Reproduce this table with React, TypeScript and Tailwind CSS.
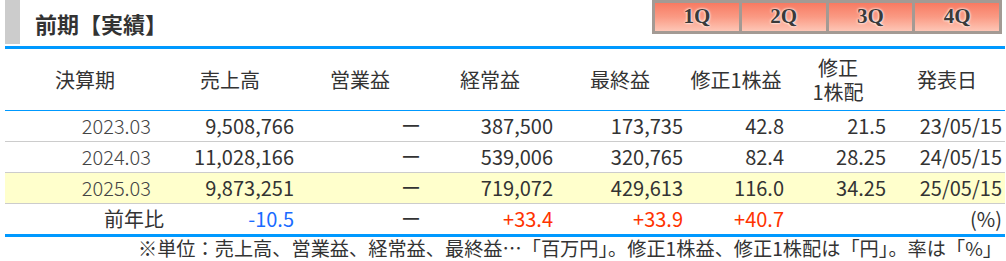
const cols = 'grid grid-cols-[160px_130px_130px_130px_130px_102px_102px_116px]'

const rows = [
  { term: '2023.03', sales: '9,508,766', op: 'ー', ord: '387,500', net: '173,735', eps: '42.8', div: '21.5', date: '23/05/15', hl: false },
  { term: '2024.03', sales: '11,028,166', op: 'ー', ord: '539,006', net: '320,765', eps: '82.4', div: '28.25', date: '24/05/15', hl: false },
  { term: '2025.03', sales: '9,873,251', op: 'ー', ord: '719,072', net: '429,613', eps: '116.0', div: '34.25', date: '25/05/15', hl: true },
]

function QuarterTabs() {
  return (
    <div className="ml-auto mr-[3px] flex h-[34px] w-[350px] gap-[3px] bg-[#a39a94] p-[3px]">
      {['1Q', '2Q', '3Q', '4Q'].map((q) => (
        <div
          key={q}
          className="flex flex-1 items-center justify-center bg-gradient-to-b from-[#f77a62] via-[#fa9a84] to-[#fdc6b6] font-['Liberation_Serif',serif] text-[21px] font-bold text-[#3a3a3a] [text-shadow:0_0_2px_#fff,0_0_3px_#fff]"
        >
          {q}
        </div>
      ))}
    </div>
  )
}

export default function App() {
  return (
    <div className="h-[261px] w-[1006px] bg-white font-['Noto_Sans_CJK_JP',sans-serif] text-[#333]">
      <div className="ml-[5px] w-[1000px]">
        {/* title + quarter tabs */}
        <div className="flex h-[46px] items-start">
          <div className="h-[44px] w-[15px] bg-[#cccccc]" />
          <div className="pl-[15px] pt-[9px] text-[22px] leading-[28px] font-bold text-[#333]">前期【実績】</div>
          <QuarterTabs />
        </div>

        <div className="border-t-[3px] border-b-[3px] border-[#0099ff]">
          {/* header */}
          <div className={`${cols} h-[62px] items-center border-b border-[#0099ff] text-center text-[20px] leading-[24px]`}>
            <div>決算期</div>
            <div>売上高</div>
            <div>営業益</div>
            <div>経常益</div>
            <div>最終益</div>
            <div>修正1株益</div>
            <div>
              修正
              <br />
              1株配
            </div>
            <div>発表日</div>
          </div>

          {rows.map((r) => (
            <div
              key={r.term}
              className={`${cols} h-[31px] items-center border-b border-[#cccccc] text-right text-[20px] leading-[30px] ${r.hl ? 'bg-[#ffffcc]' : ''}`}
            >
              <div className="pr-[14px] font-light text-[#444]">{r.term}</div>
              <div className="pr-[1px]">{r.sales}</div>
              <div className="pr-[4px]">{r.op}</div>
              <div className="pr-[2px]">{r.ord}</div>
              <div className="pr-[2px]">{r.net}</div>
              <div className="pr-[3px]">{r.eps}</div>
              <div className="pr-[3px]">{r.div}</div>
              <div className="pr-[3px]">{r.date}</div>
            </div>
          ))}

          {/* year over year */}
          <div className={`${cols} h-[30px] items-center text-right text-[20px] leading-[30px]`}>
            <div className="pr-[1px]">前年比</div>
            <div className="pr-[1px] text-[#1a6bff]">-10.5</div>
            <div className="pr-[4px]">ー</div>
            <div className="pr-[2px] text-[#ff3300]">+33.4</div>
            <div className="pr-[2px] text-[#ff3300]">+33.9</div>
            <div className="pr-[3px] text-[#ff3300]">+40.7</div>
            <div />
            <div className="pr-[3px]">(%)</div>
          </div>
        </div>

        <div className="pr-[3px] text-right text-[19.2px] leading-[22px] whitespace-nowrap">
          ※単位：売上高、営業益、経常益、最終益…「百万円」。修正1株益、修正1株配は「円」。率は「%」
        </div>
      </div>
    </div>
  )
}
